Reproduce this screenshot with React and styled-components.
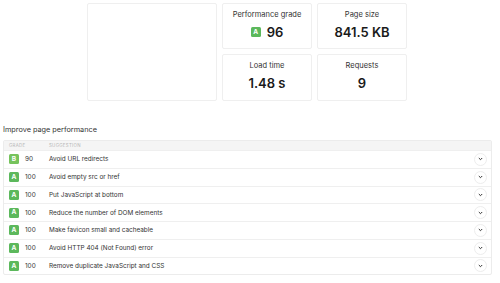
import React from 'react';
import styled, { createGlobalStyle } from 'styled-components';

const GlobalStyle = createGlobalStyle`
  html, body {
    margin: 0;
    padding: 0;
    background: #fff;
    font-family: Inter, "Liberation Sans", sans-serif;
    color: #222;
  }
`;

const Page = styled.div`
  width: 500px;
  height: 283px;
  overflow: hidden;
  padding: 3px 8px 0 3px;
  box-sizing: border-box;
`;

const Summary = styled.div`
  display: grid;
  grid-template-columns: 130px 90px 90px;
  grid-template-rows: 46px 47px;
  gap: 5px;
  margin-left: 84px;
`;

const Card = styled.div`
  border: 1px solid #efefef;
  border-radius: 2px;
  box-sizing: border-box;
  display: flex;
  flex-direction: column;
  align-items: center;
  padding-top: 6px;
`;

const Blank = styled(Card)`
  grid-row: span 2;
`;

const Label = styled.div`
  font-size: 7.5px;
  color: #333;
  line-height: 10px;
`;

const Value = styled.div`
  display: flex;
  align-items: center;
  gap: 6px;
  font-size: 13px;
  font-weight: 600;
  color: #1a1a1a;
  margin-top: 4px;
  line-height: 16px;
`;

const Badge = styled.span`
  display: inline-flex;
  align-items: center;
  justify-content: center;
  width: 10px;
  height: 10px;
  border-radius: 1.5px;
  background: ${(p) => (p.$grade === 'B' ? '#76c35c' : '#5cb85c')};
  color: #fff;
  font-size: 6.5px;
  font-weight: 700;
  line-height: 1;
`;

const Heading = styled.div`
  font-size: 7.3px;
  color: #333;
  margin-top: 24px;
  line-height: 10px;
`;

const Table = styled.div`
  margin-top: 5px;
  border: 1px solid #ececec;
  border-radius: 2px;
  width: 489px;
  box-sizing: border-box;
`;

const HeadRow = styled.div`
  display: grid;
  grid-template-columns: 40px 1fr;
  align-items: center;
  height: 9px;
  background: #f5f5f5;
  padding-left: 5px;
  font-size: 4.4px;
  letter-spacing: 0.3px;
  color: #b5b5b5;
  text-transform: uppercase;
`;

const Row = styled.div`
  display: grid;
  grid-template-columns: 16px 24px 1fr 14px;
  align-items: center;
  height: 17.75px;
  padding: 0 3px 0 5px;
  border-top: 1px solid #efefef;
  box-sizing: border-box;
  font-size: 6.4px;
  color: #333;
`;

const Score = styled.span`
  font-size: 6.4px;
  color: #333;
`;

const Toggle = styled.span`
  width: 13px;
  height: 13px;
  border-radius: 50%;
  border: 1px solid #ededed;
  box-sizing: border-box;
  display: flex;
  align-items: center;
  justify-content: center;
`;

const Chevron = () => (
  <svg width="5" height="4" viewBox="0 0 5 4">
    <path d="M0.8 1 L2.5 2.7 L4.2 1" fill="none" stroke="#333" strokeWidth="1" />
  </svg>
);

const rows = [
  ['B', 90, 'Avoid URL redirects'],
  ['A', 100, 'Avoid empty src or href'],
  ['A', 100, 'Put JavaScript at bottom'],
  ['A', 100, 'Reduce the number of DOM elements'],
  ['A', 100, 'Make favicon small and cacheable'],
  ['A', 100, 'Avoid HTTP 404 (Not Found) error'],
  ['A', 100, 'Remove duplicate JavaScript and CSS'],
];

const App = () => (
  <Page>
    <GlobalStyle />
    <Summary>
      <Blank />
      <Card>
        <Label>Performance grade</Label>
        <Value><Badge $grade="A">A</Badge>96</Value>
      </Card>
      <Card>
        <Label>Page size</Label>
        <Value>841.5 KB</Value>
      </Card>
      <Card>
        <Label>Load time</Label>
        <Value>1.48 s</Value>
      </Card>
      <Card>
        <Label>Requests</Label>
        <Value>9</Value>
      </Card>
    </Summary>
    <Heading>Improve page performance</Heading>
    <Table>
      <HeadRow><span>Grade</span><span>Suggestion</span></HeadRow>
      {rows.map(([grade, score, text]) => (
        <Row key={text}>
          <Badge $grade={grade}>{grade}</Badge>
          <Score>{score}</Score>
          <span>{text}</span>
          <Toggle><Chevron /></Toggle>
        </Row>
      ))}
    </Table>
  </Page>
);

export default App;
